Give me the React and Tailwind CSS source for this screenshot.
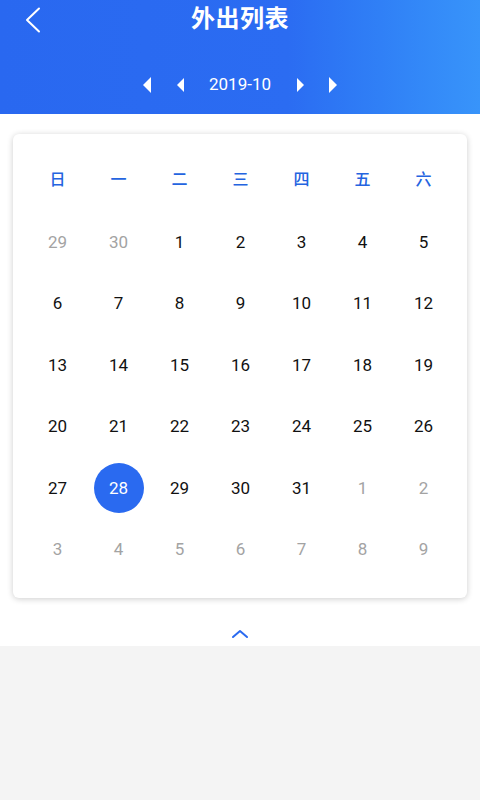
import React from 'react';

const weekDays = ['日', '一', '二', '三', '四', '五', '六'];

// 2019-10 starts on Tuesday; pad with prev/next month days
const buildDays = () => {
  const days = [];
  days.push({ n: 29, muted: true }, { n: 30, muted: true });
  for (let i = 1; i <= 31; i++) days.push({ n: i, muted: false });
  let next = 1;
  while (days.length < 42) days.push({ n: next++, muted: true });
  return days;
};

const Caret = ({ dir, big }) => {
  const w = big ? 8 : 7;
  const h = big ? 16 : 14;
  return (
    <svg width={w} height={h} viewBox={`0 0 ${w} ${h}`} className="block">
      {dir === 'left' ? (
        <path d={`M${w} 0 L0 ${h / 2} L${w} ${h} Z`} fill="white" strokeLinejoin="round" />
      ) : (
        <path d={`M0 0 L${w} ${h / 2} L0 ${h} Z`} fill="white" strokeLinejoin="round" />
      )}
    </svg>
  );
};

export default function App() {
  const days = buildDays();
  const selected = 28;

  return (
    <div className="w-[480px] h-[800px] bg-[#f4f4f4] flex flex-col" style={{ fontFamily: 'Roboto, "Noto Sans CJK SC", sans-serif' }}>
      <div className="h-[114px] bg-gradient-to-r from-[#2968f0] via-[#2b6cf2] via-60% to-[#3894fa] flex flex-col">
        <div className="h-[40px] relative flex items-center justify-center">
          <svg className="absolute left-[24px] top-[7px]" width="18" height="26" viewBox="0 0 18 26">
            <path d="M15 1.5 L3 13 L15 24.5" stroke="white" strokeWidth="2" fill="none" strokeLinejoin="round" strokeLinecap="round" />
          </svg>
          <span className="text-white text-[24px] font-bold tracking-[0.5px] -mt-[2px]">外出列表</span>
        </div>
        <div className="flex items-center justify-center mt-[30px] h-[30px]">
          <button className="flex"><Caret dir="left" big /></button>
          <button className="flex ml-[26px]"><Caret dir="left" /></button>
          <span className="text-white text-[17px] ml-[25px] mr-[26px]">2019-10</span>
          <button className="flex"><Caret dir="right" /></button>
          <button className="flex ml-[25px]"><Caret dir="right" big /></button>
        </div>
      </div>

      <div className="bg-white pt-[20px] pb-[7px] px-[13px]">
        <div className="bg-white rounded-[6px] shadow-[0_1px_6px_rgba(0,0,0,0.2)] pt-[15px] pb-[18px] pl-[14px] pr-[13px]">
          <div className="grid grid-cols-7">
            {weekDays.map((d) => (
              <div key={d} className="h-[61.5px] pt-[1px] flex items-center justify-center text-[#2464e0] text-[16px] font-medium">
                {d}
              </div>
            ))}
            {days.map((d, i) => (
              <div key={i} className="h-[61.5px] pt-[2px] flex items-center justify-center">
                {!d.muted && d.n === selected ? (
                  <div className="w-[50px] h-[50px] rounded-full bg-[#2a6af0] flex items-center justify-center text-white text-[17px]">
                    {d.n}
                  </div>
                ) : (
                  <span className={`text-[17px] ${d.muted ? 'text-[#a3a3a3]' : 'text-[#111]'}`}>{d.n}</span>
                )}
              </div>
            ))}
          </div>
        </div>
        <div className="flex justify-center mt-[31px] h-[10px]">
          <svg width="18" height="10" viewBox="0 0 18 10">
            <path d="M2 8 L9 2 L16 8" stroke="#2a6af0" strokeWidth="2" fill="none" strokeLinecap="round" strokeLinejoin="round" />
          </svg>
        </div>
      </div>
      <div className="flex-1 bg-[#f4f4f4]" />
    </div>
  );
}
